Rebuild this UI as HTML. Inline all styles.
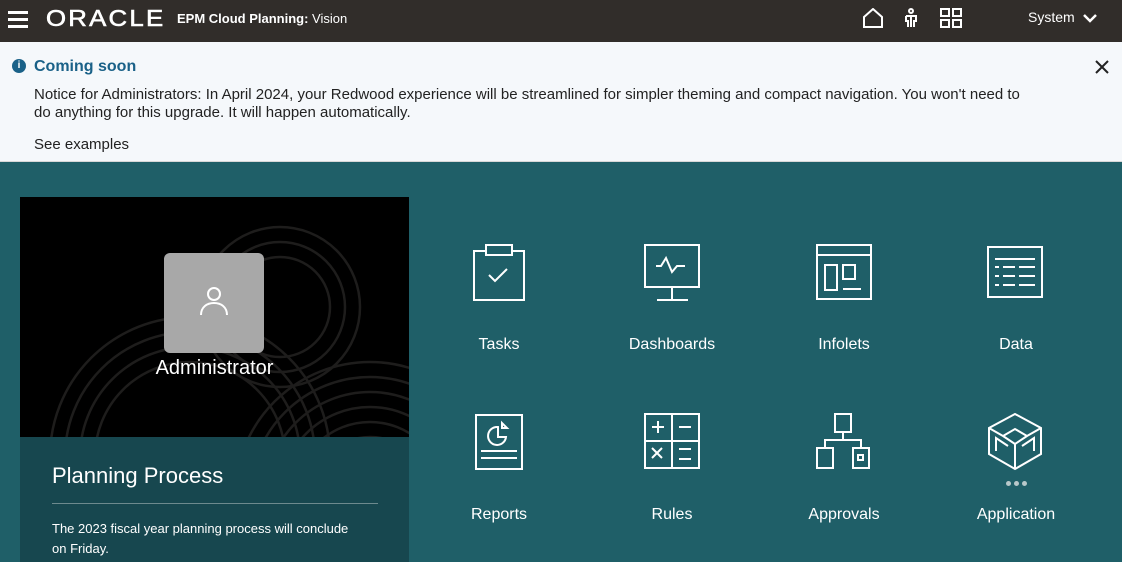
<!DOCTYPE html>
<html><head><meta charset="utf-8"><style>
*{margin:0;padding:0;box-sizing:border-box}
html,body{width:1122px;height:562px;overflow:hidden}
body{font-family:"Liberation Sans",sans-serif;background:#1f5f68;position:relative}
.hdr{position:absolute;left:0;top:0;width:1122px;height:42px;background:#312d2a;color:#fff}
.ban{position:absolute;left:0;top:42px;width:1122px;height:120px;background:#f5f8fb;border-bottom:1px solid #d8d8d8}
.abs{position:absolute}
.lbl{position:absolute;color:#fff;font-size:16px;width:160px;text-align:center}
svg.ic{position:absolute;fill:none;stroke:#fff;stroke-width:2}
</style></head><body>
<div class="hdr">
 <div class="abs" style="left:8px;top:11px;width:20px;height:3px;background:#fff;box-shadow:0 7px 0 #fff,0 14px 0 #fff"></div>
 <div class="abs" style="left:46px;top:5px;font-size:23px;letter-spacing:2px;transform:scaleX(1.12);transform-origin:left;-webkit-text-stroke:0.6px #fff">ORACLE</div>
 <div class="abs" style="left:177px;top:11px;font-size:13px"><b>EPM Cloud Planning:</b> Vision</div>
 <svg class="ic" style="left:862px;top:8px" width="22" height="20" viewBox="0 0 22 20"><path d="M2 9 L11 1 L20 9 V19 H2 Z"/></svg>
 <svg class="ic" style="left:903px;top:8px;stroke-width:2" width="16" height="20" viewBox="0 0 16 20"><circle cx="8" cy="3" r="2"/><path d="M3 8h10v5H11v6M5 19v-6H3V8M8 8v11"/></svg>
 <svg class="ic" style="left:940px;top:8px" width="22" height="20" viewBox="0 0 22 20"><rect x="1" y="1" width="8" height="7"/><rect x="13" y="1" width="8" height="7"/><rect x="1" y="12" width="8" height="7"/><rect x="13" y="12" width="8" height="7"/></svg>
 <div class="abs" style="left:1028px;top:9px;font-size:14px">System</div>
 <svg class="ic" style="left:1083px;top:13px;stroke-width:2.5" width="14" height="10" viewBox="0 0 14 10"><path d="M1 2l6 6 6-6"/></svg>
</div>
<div class="ban">
 <div class="abs" style="left:12px;top:17px;width:14px;height:14px;border-radius:50%;background:#1a6188;color:#fff;font-size:10px;font-weight:bold;text-align:center;line-height:14px">i</div>
 <div class="abs" style="left:34px;top:16px;font-size:16px;font-weight:bold;color:#1a6188">Coming soon</div>
 <div class="abs" style="left:34px;top:44px;width:1005px;font-size:15px;color:#222;line-height:18px">Notice for Administrators: In April 2024, your Redwood experience will be streamlined for simpler theming and compact navigation. You won't need to do anything for this upgrade. It will happen automatically.</div>
 <div class="abs" style="left:34px;top:94px;font-size:15px;color:#222">See examples</div>
 <svg class="ic" style="left:1095px;top:18px;stroke:#222;stroke-width:2" width="14" height="14" viewBox="0 0 14 14"><path d="M1 1l12 12M13 1L1 13"/></svg>
</div>
<div class="abs" style="left:20px;top:197px;width:389px;height:240px;background:#000;overflow:hidden">
 <svg class="abs" style="left:0;top:0;stroke:#1e1d1c;stroke-width:2.5;fill:none" width="389" height="240">
  <circle cx="350" cy="300" r="60"/><circle cx="350" cy="300" r="75"/><circle cx="350" cy="300" r="90"/><circle cx="350" cy="300" r="105"/><circle cx="350" cy="300" r="120"/><circle cx="350" cy="300" r="135"/>
  <circle cx="170" cy="260" r="95"/><circle cx="170" cy="260" r="110"/><circle cx="170" cy="260" r="125"/><circle cx="170" cy="260" r="140"/>
  <circle cx="260" cy="110" r="50"/><circle cx="260" cy="110" r="65"/><circle cx="260" cy="110" r="80"/>
 </svg>
 <div class="abs" style="left:144px;top:56px;width:100px;height:100px;border-radius:6px;background:#a8a8a8"></div>
 <svg class="ic" style="left:178px;top:88px" width="32" height="34" viewBox="0 0 32 34"><circle cx="16" cy="9" r="6"/><path d="M3 30c0-8 6-12 13-12s13 4 13 12"/></svg>
 <div class="abs" style="left:0;top:160px;width:389px;text-align:center;color:#fff;font-size:20px">Administrator</div>
</div>
<div class="abs" style="left:20px;top:437px;width:389px;height:125px;background:#17474f">
 <div class="abs" style="left:32px;top:26px;color:#fff;font-size:22px">Planning Process</div>
 <div class="abs" style="left:32px;top:66px;width:326px;height:1px;background:#6d8a8e"></div>
 <div class="abs" style="left:32px;top:82px;width:310px;color:#fff;font-size:13px;line-height:20px">The 2023 fiscal year planning process will conclude on Friday.</div>
</div>
<svg class="ic" style="left:472px;top:244px" width="56" height="58" viewBox="0 0 56 58"><path d="M14 7H2v49h50V7H40"/><rect x="14" y="1" width="26" height="10"/><path d="M17 31l6 6 12-12"/></svg>
<svg class="ic" style="left:644px;top:244px" width="58" height="58" viewBox="0 0 58 58"><rect x="1" y="1" width="54" height="42"/><path d="M28 43v13M13 56h31M12 22h5l5-8 6 14 5-6h8"/></svg>
<svg class="ic" style="left:816px;top:244px" width="58" height="58" viewBox="0 0 58 58"><rect x="1" y="1" width="54" height="54"/><path d="M1 11h54"/><rect x="9" y="21" width="12" height="25"/><rect x="27" y="21" width="12" height="14"/><path d="M27 45h18"/></svg>
<svg class="ic" style="left:987px;top:246px" width="58" height="56" viewBox="0 0 58 56"><rect x="1" y="1" width="54" height="50"/><path d="M8 13h40M8 21h4M16 21h12M32 21h16M8 30h4M16 30h12M32 30h16M8 39h4M16 39h12M32 39h16"/></svg>
<div class="lbl" style="left:419px;top:336px">Tasks</div>
<div class="lbl" style="left:592px;top:336px">Dashboards</div>
<div class="lbl" style="left:764px;top:336px">Infolets</div>
<div class="lbl" style="left:936px;top:336px">Data</div>
<svg class="ic" style="left:474px;top:413px" width="52" height="58" viewBox="0 0 52 58"><rect x="2" y="2" width="46" height="54"/><path d="M24 14a9 9 0 1 0 8 10h-8z"/><path d="M28 10v5h5z"/><path d="M7 38h36M7 45h36"/></svg>
<svg class="ic" style="left:644px;top:413px" width="58" height="58" viewBox="0 0 58 58"><rect x="1" y="1" width="54" height="54"/><path d="M28 1v54M1 28h54M8 14h12M14 8v12M35 14h12M8 35l10 10M18 35L8 45M35 36h12M35 46h12"/></svg>
<svg class="ic" style="left:816px;top:413px" width="58" height="58" viewBox="0 0 58 58"><rect x="19" y="1" width="16" height="18"/><path d="M27 19v8M9 35v-8h36v8"/><rect x="1" y="35" width="16" height="20"/><rect x="37" y="35" width="16" height="20"/><rect x="42" y="42" width="5" height="5"/></svg>
<svg class="ic" style="left:988px;top:413px" width="56" height="58" viewBox="0 0 56 58"><path d="M27 1L53 15V41L27 56L1 41V15Z"/><path d="M1 15l14 8M53 15l-14 8M15 23l12 8 12-8M15 23l12-7 12 7M27 31V56M8 38V25l12 8M46 38V25l-12 8"/></svg>
<div class="abs" style="left:1006px;top:481px;width:5px;height:5px;border-radius:50%;background:#b8c8ca;box-shadow:8px 0 0 #b8c8ca,16px 0 0 #b8c8ca"></div>
<div class="lbl" style="left:419px;top:506px">Reports</div>
<div class="lbl" style="left:592px;top:506px">Rules</div>
<div class="lbl" style="left:764px;top:506px">Approvals</div>
<div class="lbl" style="left:936px;top:506px">Application</div>
</body></html>
